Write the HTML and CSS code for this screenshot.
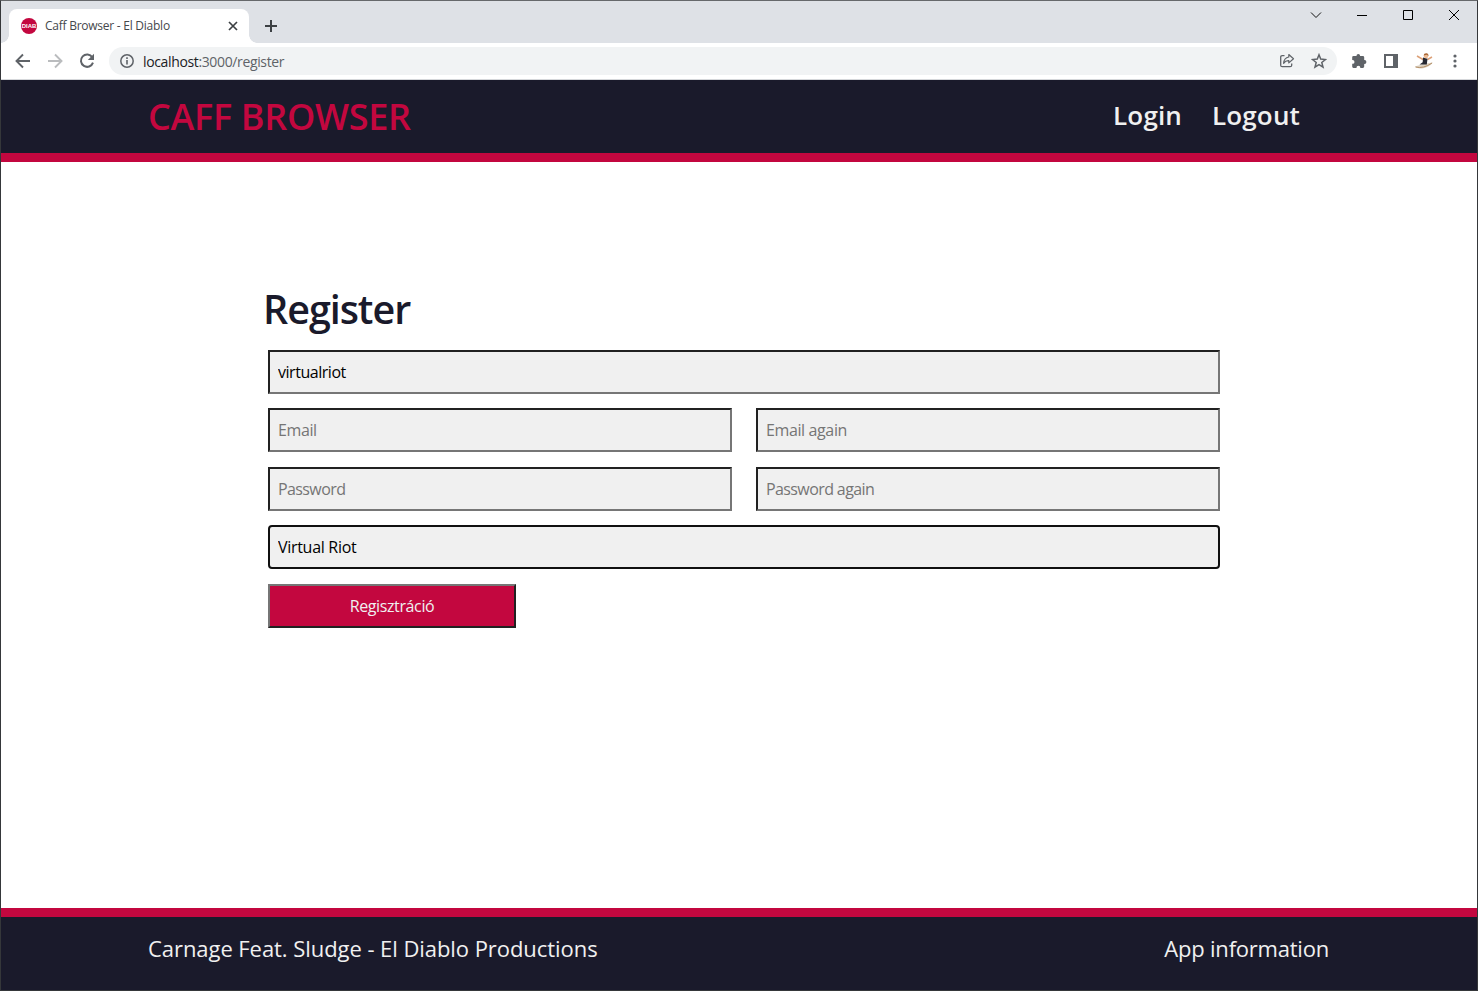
FILE: index.html
```
<!DOCTYPE html>
<html lang="hu">
<head>
<meta charset="utf-8">
<title>Caff Browser - El Diablo</title>
<link rel="stylesheet" href="styles.css">
</head>
<body>
<div class="window">
  <div class="tabstrip">
    <div class="tab">
      <span class="favicon">DIAB</span>
      <span class="tab-title">Caff Browser - El Diablo</span>
      <svg class="tab-close" width="10" height="10" viewBox="0 0 10 10"><path d="M1 1l8 8M9 1L1 9" stroke="#3c4043" stroke-width="1.7" fill="none"/></svg>
    </div>
    <svg class="new-tab" width="12" height="12" viewBox="0 0 12 12"><path d="M6 0v12M0 6h12" stroke="#3c4043" stroke-width="2"/></svg>
    <div class="window-buttons">
      <svg width="46" height="28" viewBox="0 0 46 28"><path d="M18 11.500l5 5 5-5" stroke="#111" fill="none"/></svg>
      <svg width="46" height="28" viewBox="0 0 46 28"><path d="M18 14.500h10" stroke="#000"/></svg>
      <svg width="46" height="28" viewBox="0 0 46 28"><path d="M18.500 9.500h9v9h-9z" stroke="#000" fill="none"/></svg>
      <svg width="46" height="28" viewBox="0 0 46 28"><path d="M18 9l10 10M28 9L18 19" stroke="#000"/></svg>
    </div>
  </div>
  <div class="toolbar">
    <svg class="nav-icon" viewBox="0 0 16 16"><path d="M15 8H2M8 1.500L1.500 8 8 14.500" stroke="#5f6368" stroke-width="1.900" fill="none"/></svg>
    <svg class="nav-icon" viewBox="0 0 16 16"><path d="M1 8h13M8 1.500L14.500 8 8 14.500" stroke="#babcbe" stroke-width="1.900" fill="none"/></svg>
    <svg class="nav-icon" viewBox="0 0 16 16"><path d="M13.300 4.200A6.200 6.200 0 1 0 14 9.700" stroke="#5f6368" stroke-width="2" fill="none"/><path d="M15 .8v6.200H8.800z" fill="#5f6368"/></svg>
    <div class="omnibox">
      <svg width="16" height="16" viewBox="0 0 16 16"><circle cx="8" cy="8" r="6.200" stroke="#5f6368" stroke-width="1.500" fill="none"/><path d="M8 7v4.500M8 4.300v1.700" stroke="#5f6368" stroke-width="1.600"/></svg>
      <span class="url"><b>localhost</b>:3000/register</span>
      <svg width="16" height="16" viewBox="0 0 16 16"><path d="M5.500 2.700H3.200Q1.700 2.700 1.700 4.200v8Q1.700 13.700 3.200 13.700h8q1.500 0 1.500-1.500V10.500" stroke="#5f6368" stroke-width="1.300" fill="none"/><path d="M9.800 1.500l4.700 4.200-4.700 4.200V7.600Q6.500 7.400 4.600 10.300 5 4.900 9.800 4z" stroke="#5f6368" stroke-width="1.200" fill="none" stroke-linejoin="round"/></svg>
      <svg class="star" width="16" height="16" viewBox="0 0 16 16"><path d="M8 1.800l1.700 4.300 4.700.4-3.600 3 1.200 4.600L8 11.600l-4 2.500 1.200-4.600-3.600-3 4.700-.4z" stroke="#5f6368" stroke-width="1.500" fill="none"/></svg>
    </div>
    <div class="actions">
      <svg width="16" height="16" viewBox="0 0 16 16"><path d="M1.200 4.300q0-1.300 1.300-1.300h3V2.700a1.800 1.800 0 0 1 3.600 0V3h2.700q1.400 0 1.400 1.300v2.800h.3a1.900 1.900 0 0 1 0 3.800h-.3v2.700q0 1.300-1.400 1.300H9.300v-.3a1.900 1.900 0 0 0-3.800 0v.3h-3q-1.300 0-1.300-1.300v-2.800h.4a1.900 1.900 0 0 0 0-3.800h-.4z" fill="#5f6368"/></svg>
      <svg class="panel" width="16" height="16" viewBox="0 0 16 16"><path d="M1 1h14v14H1zM3 3v10h7V3z" fill="#5f6368" fill-rule="evenodd"/></svg>
      <svg width="20" height="18" viewBox="0 0 20 18"><path d="M1 14.500Q10 11 19 10.500q-4 5-11 6-5 0-7-2z" fill="#ddd3c4"/><path d="M1.500 15q8 2 16.500-4" stroke="#b18c63" fill="none"/><path d="M9 7.500L3 4M13.500 7.500L18 5" stroke="#dda178" stroke-width="1.500"/><path d="M9 5.500l4.500 1.200-.7 5.800H5.500l3.200-2.300z" fill="#252832"/><circle cx="12" cy="4" r="2.300" fill="#edbb94"/><path d="M9.600 3.600Q9.800 1.100 12.500 1.300q2.300.3 1.900 2.900L13 2.700z" fill="#a96735"/></svg>
      <svg class="dots" width="16" height="16" viewBox="0 0 16 16"><g fill="#5f6368"><circle cx="8" cy="3" r="1.600"/><circle cx="8" cy="8" r="1.600"/><circle cx="8" cy="13" r="1.600"/></g></svg>
    </div>
  </div>
  <header class="site-header">
    <span class="brand">CAFF BROWSER</span>
    <nav class="menu"><a>Login</a><a>Logout</a></nav>
  </header>
  <main class="content">
    <h1 class="heading">Register</h1>
    <form class="form">
      <input class="field wide username" type="text" value="virtualriot">
      <input class="field" type="text" placeholder="Email">
      <input class="field" type="text" placeholder="Email again">
      <input class="field secret" type="password" placeholder="Password">
      <input class="field secret" type="password" placeholder="Password again">
      <input class="field wide active" type="text" value="Virtual Riot">
      <button class="submit" type="button">Regisztráció</button>
    </form>
  </main>
  <footer class="site-footer">
    <span class="company">Carnage Feat. Sludge - El Diablo Productions</span>
    <a class="info">App information</a>
  </footer>
</div>
</body>
</html>
```
FILE: styles.css
```
* { box-sizing: border-box; }
body {
  margin: 0;
  font-family: "Segoe UI", "Open Sans", "Noto Sans", sans-serif;
}
svg { display: block; flex: none; }
.window {
  width: 1478px;
  height: 991px;
  display: flex;
  flex-direction: column;
  border: 1px solid #35373a;
  border-top-color: #66686b;
  background: #fff;
  overflow: hidden;
  white-space: nowrap;
}

/* Browser chrome */
.tabstrip {
  height: 42px;
  flex: none;
  display: flex;
  background: #dee1e6;
}
.tab {
  width: 240px;
  height: 34px;
  margin: 8px 0 0 8px;
  padding: 0 11px 0 12px;
  display: flex;
  align-items: center;
  background: #fff;
  border-radius: 8px 8px 0 0;
  position: relative;
}
.tab::before, .tab::after {
  content: "";
  position: absolute;
  bottom: 0;
  width: 8px;
  height: 8px;
}
.tab::before { left: -8px; background: radial-gradient(circle at 0 0, #dee1e6 7.5px, #fff 8px); }
.tab::after { right: -8px; background: radial-gradient(circle at 100% 0, #dee1e6 7.5px, #fff 8px); }
.favicon {
  width: 16px;
  height: 16px;
  border-radius: 50%;
  background: #c3073f;
  color: #fff;
  font: bold 6px/16px "Liberation Sans", sans-serif;
  text-align: center;
}
.tab-title {
  flex: 1;
  margin-left: 8px;
  padding-bottom: 1px;
  font-size: 12px;
  letter-spacing: -.25px;
  color: #45484c;
}
.new-tab { margin: 19px 0 0 16px; }
.window-buttons { display: flex; margin-left: auto; }
.toolbar {
  height: 37px;
  flex: none;
  display: flex;
  align-items: center;
  padding: 0 14px;
  border-bottom: 1px solid #d5d7da;
}
.nav-icon { width: 16px; height: 16px; margin-right: 16px; }
.omnibox {
  width: 1228px;
  flex: none;
  height: 28px;
  margin-left: -2px;
  padding: 0 10px;
  display: flex;
  align-items: center;
  border-radius: 14px;
  background: #f1f3f4;
}
.url {
  flex: 1;
  margin-left: 8px;
  font-size: 14px;
  letter-spacing: -.36px;
  color: #5f6368;
}
.url b { font-weight: 400; color: #202124; }
.star { margin-left: 16px; }
.actions { display: flex; align-items: center; gap: 15px; margin-left: 14px; }
.panel { margin-left: 1px; }
.dots { margin-left: -2px; }

/* Site */
.site-header {
  height: 82px;
  flex: none;
  display: flex;
  justify-content: space-between;
  align-items: center;
  padding: 0 177px 0 147px;
  background: #1a1a2b;
  border-bottom: 9px solid #c3073f;
}
.brand { font-size: 36px; font-weight: 600; letter-spacing: -.3px; color: #c3073f; }
.menu {
  display: flex;
  gap: 30px;
  padding-bottom: 4px;
  font-size: 26px;
  font-weight: 600;
  letter-spacing: .15px;
  color: #f0f0f0;
}
.content { flex: 1; padding: 119px 258px 0 262px; }
.heading {
  margin: 0;
  font-size: 39.500px;
  line-height: 56px;
  font-weight: 550;
  letter-spacing: -1.05px;
  color: #1a1a2b;
}
.form {
  display: grid;
  grid-template-columns: 464px 464px;
  grid-auto-rows: 44px;
  gap: 14.400px 24px;
  margin: 13px 0 0 5px;
}
.field, .submit {
  font: 16px "Segoe UI", "Open Sans", "Noto Sans", sans-serif;
  letter-spacing: -.38px;
}
.field {
  width: 100%;
  height: 44px;
  padding: 0 8px;
  border: 2px solid;
  border-color: #212121 #767676 #767676 #212121;
  background: #f0f0f0;
  color: #000;
  outline: none;
}
.field::placeholder { color: #757575; }
.username { letter-spacing: -.46px; }
.secret { letter-spacing: -.6px; }
.wide { grid-column: 1 / 3; }
.active { border-color: #101010; border-radius: 4px; letter-spacing: -.3px; }
.submit {
  width: 248px;
  height: 44px;
  padding: 0;
  border: 2px solid;
  border-color: #767676 #212121 #212121 #767676;
  background: #c3073f;
  color: #f0f0f0;
}
.site-footer {
  height: 82px;
  flex: none;
  display: flex;
  justify-content: space-between;
  align-items: center;
  padding: 0 148px 11px 147px;
  background: #1a1a2b;
  border-top: 9px solid #c3073f;
  font-size: 22px;
  color: #f0f0f0;
}
.company { letter-spacing: -.06px; }
.info { letter-spacing: -.22px; }
```
